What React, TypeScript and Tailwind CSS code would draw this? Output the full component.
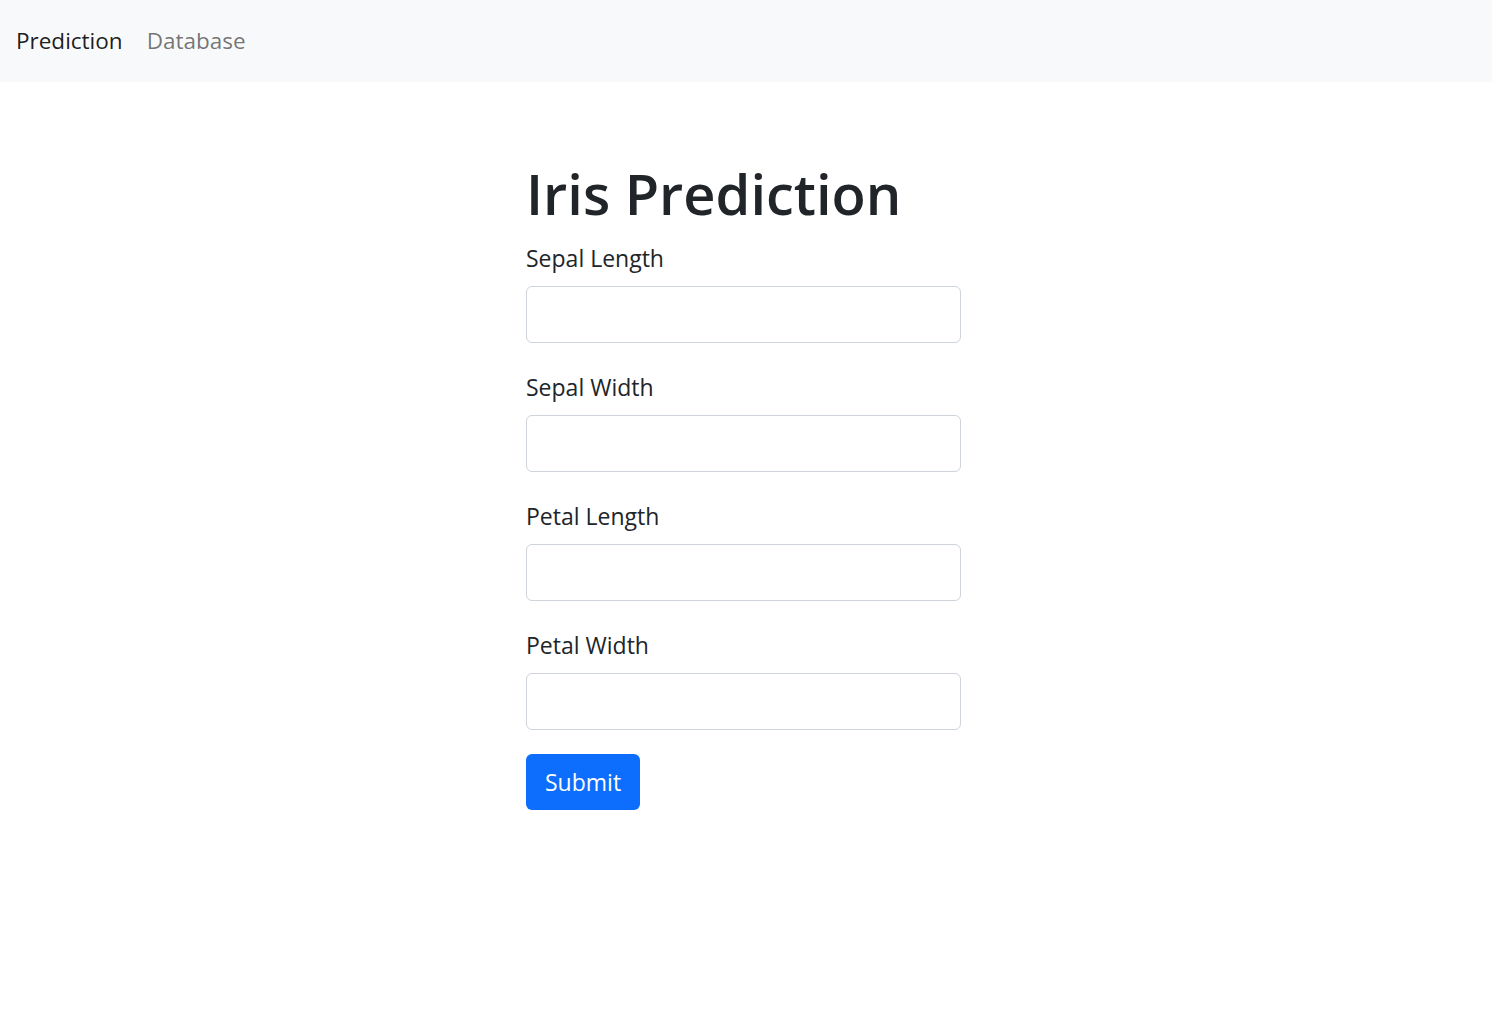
import React from "react";

const fields = ["Sepal Length", "Sepal Width", "Petal Length", "Petal Width"];

const Field = ({ label }: { label: string }) => {
  return (
    <div className="flex flex-col">
      <label className="text-[23px] leading-[30px] text-[#212529] mb-[13px]">
        {label}
      </label>
      <input
        type="text"
        className="w-[435px] h-[57px] rounded-[6px] border border-[#ced4da] bg-white px-3 outline-none"
      />
    </div>
  );
};

export default function App() {
  return (
    <div
      className="min-h-screen bg-white"
      style={{ fontFamily: '"Open Sans", "Noto Sans", sans-serif' }}
    >
      <nav className="h-[82px] bg-[#f8f9fa] flex items-center px-4 gap-[24px]">
        <a className="text-[22.5px] text-[rgba(0,0,0,0.9)] cursor-pointer">
          Prediction
        </a>
        <a className="text-[22.5px] text-[rgba(0,0,0,0.55)] cursor-pointer">
          Database
        </a>
      </nav>
      <main className="w-[440px] mx-auto pt-[75px] flex flex-col items-start">
        <h1 className="text-[56px] leading-[72px] font-semibold text-[#212529] mb-[14px]">
          Iris Prediction
        </h1>
        <div className="flex flex-col gap-[29px]">
          {fields.map((f) => (
            <Field key={f} label={f} />
          ))}
        </div>
        <button className="mt-[24px] h-[56px] px-[19px] rounded-[6px] bg-[#0d6efd] text-white text-[23px]">
          Submit
        </button>
      </main>
    </div>
  );
}
